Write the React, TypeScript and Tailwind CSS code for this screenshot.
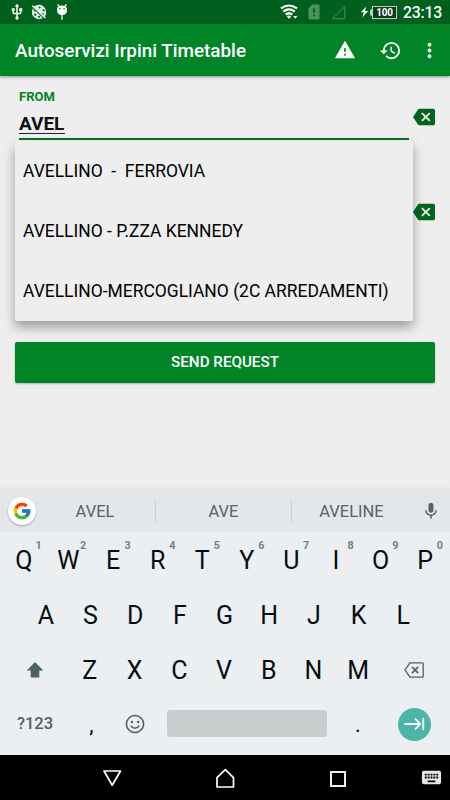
import { FcGoogle } from "react-icons/fc";
import {
	MdBackspace,
	MdHistory,
	MdKeyboard,
	MdMic,
	MdMoreVert,
	MdUsb,
	MdWarning,
} from "react-icons/md";

const stops = [
	"AVELLINO  -  FERROVIA",
	"AVELLINO - P.ZZA KENNEDY",
	"AVELLINO-MERCOGLIANO (2C ARREDAMENTI)",
];

const topRow = ["Q", "W", "E", "R", "T", "Y", "U", "I", "O", "P"];
const middleRow = ["A", "S", "D", "F", "G", "H", "J", "K", "L"];
const bottomRow = ["Z", "X", "C", "V", "B", "N", "M"];

const StatusBar = () => (
	<div className="flex h-6 items-center justify-between bg-[#00601d] pr-[8px] pl-[8px] text-white">
		<div className="flex items-center">
			<MdUsb size={18} />
			<svg width="16" height="16" viewBox="0 0 16 16" className="ml-[5px]">
				<circle cx="8" cy="8" r="7.200" fill="#e6f2e9" />
				<g fill="#00601d">
					<circle cx="8.600" cy="3.500" r="1.100" />
					<circle cx="12.600" cy="6.400" r="1.100" />
					<circle cx="12" cy="10" r=".9" />
					<circle cx="3.600" cy="6.400" r="1" />
					<circle cx="4.200" cy="10.600" r="1.200" />
					<circle cx="8" cy="12.800" r="1.100" />
				</g>
				<path d="M1.400 3l11.800 11.200" stroke="#00601d" strokeWidth="1.500" />
				<path d="M1.400 1.600l13 12.400" stroke="#e6f2e9" strokeWidth="1.500" />
			</svg>
			<svg width="12" height="16" viewBox="0 0 12 16" className="ml-[9px]">
				<path
					d="M2 .8l1.2 1.600M10 .8L8.800 2.400M6 10v5.200"
					stroke="#fff"
					strokeWidth="1.300"
					strokeLinecap="round"
				/>
				<path
					d="M1.100 4.200Q2.400 1.600 6 1.600t4.900 2.600V7.500Q10 11 6 11T1.100 7.500z"
					fill="#fff"
				/>
				<circle cx="3.900" cy="4.700" r=".8" fill="#00601d" />
				<circle cx="8.100" cy="4.700" r=".8" fill="#00601d" />
			</svg>
		</div>
		<div className="flex items-center">
			<svg width="19" height="16" viewBox="0 0 19 16">
				<path
					d="M1 4.400Q9 -1.400 17 4.400M3.300 7.500Q9 3.200 14.700 7.500M5.700 10.500Q9 8 12.300 10.500"
					fill="none"
					stroke="#fff"
					strokeWidth="2.200"
				/>
				<path d="M6.800 12.200Q9 10.800 11.200 12.200L9 15z" fill="#fff" />
				<path d="M13.200 12h4.200l-2.100 2.800z" fill="#fff" />
			</svg>
			<svg width="12" height="16" viewBox="0 0 12 16" className="ml-[9px]">
				<path
					d="M4.200.5H10Q11.500.5 11.500 2v12q0 1.500-1.500 1.500H2Q.5 15.500.5 14V4.200z"
					fill="#4d9060"
				/>
				<path d="M5.200 4.500h1.700v4.500H5.200zM5.200 10.500h1.700v1.700H5.200z" fill="#00601d" />
			</svg>
			<svg width="15" height="15" viewBox="0 0 15 15" className="ml-[11px]">
				<path d="M13.800 1.400v12.300H1.500z" fill="none" stroke="#4d9060" />
			</svg>
			<svg width="9" height="12" viewBox="0 0 9 12" className="ml-[14px]">
				<path d="M6.200.5L.8 6.300h3L2.300 11.300 8.300 5H5z" fill="#fff" />
			</svg>
			<div className="ml-px flex items-center">
				<div className="h-[7px] w-[2px] rounded-l-sm bg-[#b8d2bf]" />
				<div className="flex h-[13px] w-[25px] items-center justify-center border border-[#b8d2bf] bg-[#123a1c] font-bold text-[10px] tracking-[-0.300px]">
					100
				</div>
			</div>
			<span className="mt-px ml-[6px] w-[39px] text-right font-medium text-[15.800px] tracking-[-0.200px]">
				23:13
			</span>
		</div>
	</div>
);

const AppBar = () => (
	<header className="relative flex h-[52px] items-center bg-[#008427] pl-[15px] text-white shadow-[0_1px_3px_rgba(0,0,0,0.4)]">
		<h1 className="flex-1 pt-[2px] font-medium text-[18.850px]">
			Autoservizi Irpini Timetable
		</h1>
		<MdWarning size={22} />
		<MdHistory size={23} className="ml-[23px]" />
		<MdMoreVert size={23} className="mr-[9px] ml-[16px]" />
	</header>
);

const Suggestions = () => (
	<div className="flex h-[43px] items-center bg-[#e3e7ea] pt-px pr-[8px] pl-[8px] text-[#56636b] text-[16.500px] shadow-[0_-1px_2px_rgba(0,0,0,0.08)]">
		<div className="flex size-[28px] shrink-0 items-center justify-center rounded-full bg-white shadow-[0_1px_2px_rgba(0,0,0,0.3)]">
			<FcGoogle size={20} />
		</div>
		<div className="w-[120px] shrink-0 border-[#c8cdd0] border-r pr-px text-center leading-[23px]">
			AVEL
		</div>
		<div className="w-[136px] shrink-0 border-[#c8cdd0] border-r text-center leading-[23px]">
			AVE
		</div>
		<div className="w-[119px] shrink-0 text-center leading-[23px]">AVELINE</div>
		<MdMic size={20} className="ml-[10px] shrink-0" />
	</div>
);

const Letter = ({ label, hint }: { label: string; hint?: number }) => (
	<div className="relative flex flex-1 items-center justify-center pt-[3px] pr-px text-[#050d12] text-[25px]">
		{label}
		{hint !== undefined && (
			<span className="absolute top-[6px] right-[5px] font-bold text-[#718087] text-[10.800px]">
				{hint}
			</span>
		)}
	</div>
);

const Keyboard = () => (
	<div className="h-[223px] bg-[#ebeff2]">
		<div className="flex h-[55px] px-[2px]">
			{topRow.map((key, i) => (
				<Letter key={key} label={key} hint={(i + 1) % 10} />
			))}
		</div>
		<div className="flex h-[55px] px-[24px]">
			{middleRow.map((key) => (
				<Letter key={key} label={key} />
			))}
		</div>
		<div className="flex h-[55px] px-[2px]">
			<div className="flex w-[66px] items-center justify-center">
				<svg width="18" height="16" viewBox="0 0 18 16">
					<path d="M9 0l8.300 8.500h-4V15.600H4.700V8.500h-4z" fill="#4d5f67" />
				</svg>
			</div>
			<div className="flex flex-1">
				{bottomRow.map((key) => (
					<Letter key={key} label={key} />
				))}
			</div>
			<div className="flex w-[67px] items-center justify-center pr-px">
				<svg
					width="20"
					height="16"
					viewBox="0 0 20 16"
					fill="none"
					stroke="#4d5f67"
					strokeWidth="1.300"
				>
					<path
						d="M5.900.8h12.300q1 0 1 1v12.400q0 1-1 1H5.900L1 8z"
						strokeLinejoin="round"
					/>
					<path d="M8 4.900l6.200 6.200M14.200 4.900L8 11.100" strokeWidth="1.600" />
				</svg>
			</div>
		</div>
		<div className="flex h-[54px] items-center">
			<div className="w-[70px] text-center font-medium text-[#4d5f67] text-[16.500px]">
				?123
			</div>
			<div className="w-[43px] text-center text-[#050d12] text-[22px]">,</div>
			<svg
				width="44"
				height="20"
				viewBox="0 0 44 20"
				fill="none"
				stroke="#4d5f67"
				strokeWidth="1.500"
				className="-mt-px"
			>
				<circle cx="22" cy="10" r="8.600" />
				<path d="M17.700 11.700q4.300 5 8.600 0" />
				<circle cx="18.900" cy="7.900" r="1.200" fill="#4d5f67" stroke="none" />
				<circle cx="25.100" cy="7.900" r="1.200" fill="#4d5f67" stroke="none" />
			</svg>
			<div className="mb-px ml-[10px] h-[27px] w-[160px] rounded-[3px] bg-[#c9cecf]" />
			<div className="w-[62px] text-center text-[#050d12] text-[22px]">.</div>
			<div className="ml-[9px] flex size-[33px] items-center justify-center rounded-full bg-[#4bb5a9]">
				<svg
					width="21"
					height="14"
					viewBox="0 0 21 14"
					fill="none"
					stroke="#fff"
					strokeWidth="1.800"
				>
					<path d="M.5 7h15.500M11 1.700L16.300 7 11 12.300M19.300 1v12" />
				</svg>
			</div>
		</div>
	</div>
);

const NavBar = () => (
	<div className="flex h-[45px] items-center bg-black">
		<svg
			width="20"
			height="18"
			viewBox="0 0 20 18"
			className="ml-[102px]"
			fill="none"
			stroke="#fff"
			strokeWidth="1.700"
		>
			<path d="M2 2h16.500L10.250 16.200z" strokeLinejoin="round" />
		</svg>
		<svg
			width="20"
			height="20"
			viewBox="0 0 20 20"
			className="mt-px ml-[93px]"
			fill="none"
			stroke="#fff"
			strokeWidth="1.700"
		>
			<path d="M2 9.700L10.300 1.700 18.500 9.700V19H2z" strokeLinejoin="round" />
		</svg>
		<div className="mt-[3px] ml-[95px] size-[16px] border-2 border-[#f0f0f0]" />
		<MdKeyboard size={23} className="ml-[74px] text-[#e8e8e8]" />
	</div>
);

const App = () => (
	<div className="flex h-[800px] w-[450px] flex-col overflow-hidden bg-[#eeeeee] font-['Roboto',sans-serif]">
		<StatusBar />
		<AppBar />
		<main className="relative flex-1 px-[15px] pt-[12px]">
			<div className="flex">
				<div className="relative w-[398px] pl-[4px]">
					<label
						htmlFor="from"
						className="block pt-px font-bold text-[#008427] text-[13px] leading-[15px]"
					>
						FROM
					</label>
					<div
						id="from"
						className="mr-[4px] h-[36px] border-[#0b7425] border-b-2 pt-[9px]"
					>
						<span className="block w-[46px] border-[#222] border-b pt-px font-bold text-[#111] text-[19px] leading-[19px]">
							AVEL
						</span>
					</div>
					<ul className="absolute top-[53px] left-0 h-[180px] w-[398px] rounded-[2px] bg-[#eeeeee] text-[17.470px] text-black shadow-[0_6px_12px_rgba(0,0,0,0.35)]">
						{stops.map((stop) => (
							<li
								key={stop}
								className="flex h-[60px] items-center whitespace-pre pt-px pl-[8px]"
							>
								{stop}
							</li>
						))}
					</ul>
				</div>
				<div className="flex flex-col gap-[73px] pt-[18px] text-[#00661c]">
					<MdBackspace size={22} />
					<MdBackspace size={22} />
				</div>
			</div>
			<button
				type="button"
				className="mt-[119px] h-[41px] w-[420px] rounded-[2px] bg-[#008427] font-medium text-[15.200px] text-white shadow-[0_1px_2px_rgba(0,0,0,0.25)]"
			>
				SEND REQUEST
			</button>
		</main>
		<Suggestions />
		<Keyboard />
		<NavBar />
	</div>
);

export default App;
